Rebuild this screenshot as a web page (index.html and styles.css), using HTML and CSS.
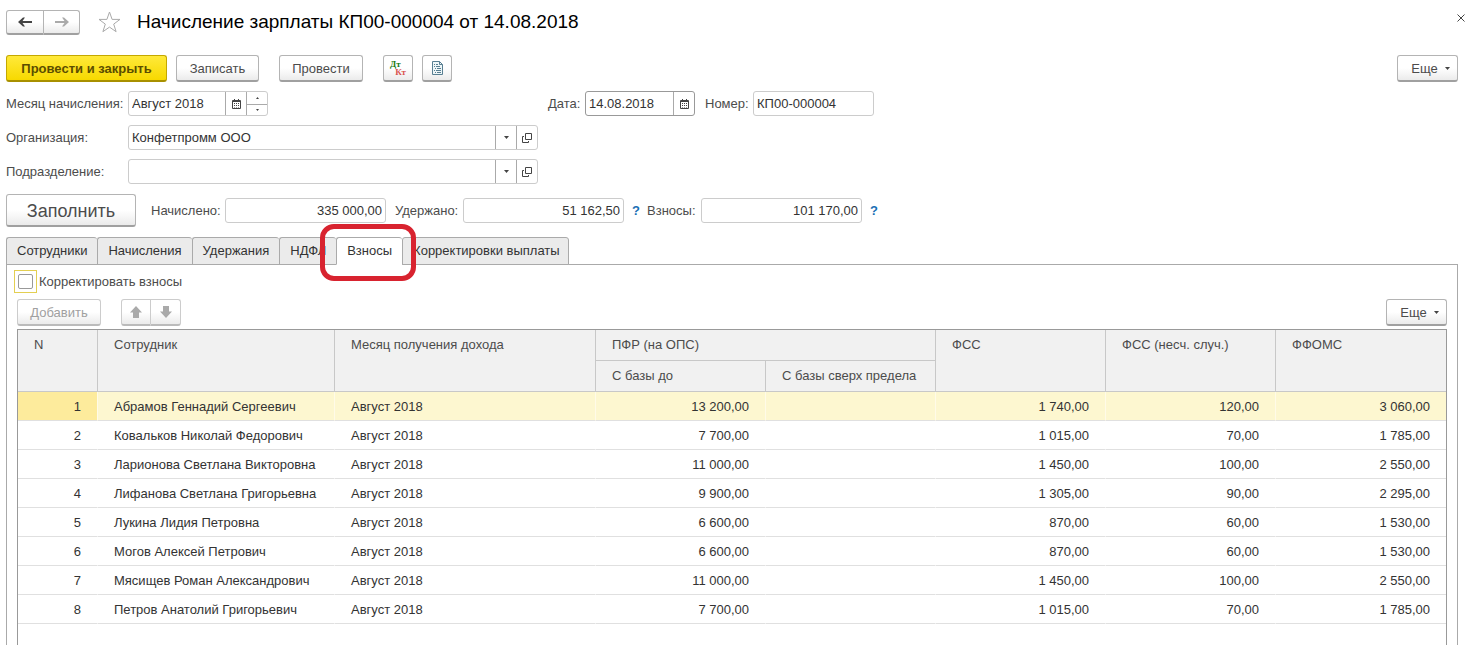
FILE: index.html
```html
<!DOCTYPE html>
<html lang="ru">
<head>
<meta charset="utf-8">
<title>Начисление зарплаты КП00-000004 от 14.08.2018</title>
<link rel="stylesheet" href="styles.css">
</head>
<body>
<svg class="sprite" aria-hidden="true">
  <symbol id="calendar" viewBox="0 0 9 10"><path fill="#444" d="M1 1h1V0h1v1h3V0h1v1h1q1 0 1 1v7q0 1-1 1H1Q0 10 0 9V2Q0 1 1 1z"/><path fill="#fff" d="M1 3h7v6H1z"/><path fill="#444" d="M2 4h1v1H2zM4 4h1v1H4zM6 4h1v1H6zM2 6h1v1H2zM4 6h1v1H4zM6 6h1v1H6zM2 8h1v.5H2zM4 8h1v.5H4zM6 8h1v.5H6z"/></symbol>
  <symbol id="open" viewBox="0 0 10 10"><path fill="none" stroke="#444" d="M3.500.5h6v6h-6zM2 3.500H.5v6h6V8"/></symbol>
  <symbol id="caret" viewBox="0 0 5 3"><path fill="#444" d="M0 0h5L2.500 3z"/></symbol>
</svg>
<main class="window">
  <header class="titlebar">
    <div class="pair">
      <button class="btn" aria-label="Назад"><svg width="14" height="10" viewBox="0 0 14 10"><path fill="#444" d="M0 5L5 .5h2L4.500 4H14v2H4.500L7 9.500H5z"/></svg></button>
      <button class="btn" aria-label="Вперед"><svg width="14" height="10" viewBox="0 0 14 10"><path fill="#aaa" d="M14 5L9 .5H7L9.500 4H0v2h9.500L7 9.500h2z"/></svg></button>
    </div>
    <button class="plain star" aria-label="В избранное"><svg width="23" height="22" viewBox="0 0 23 22"><path fill="none" stroke="#aaa" d="M11.500 1l2.600 7.400h7.900l-6.300 4.700 2.400 7.600-6.600-4.600-6.600 4.600 2.400-7.600L1 8.400h7.900z"/></svg></button>
    <h1 class="title">Начисление зарплаты КП00-000004 от 14.08.2018</h1>
    <button class="plain close" aria-label="Закрыть"><svg width="8" height="8" viewBox="0 0 8 8"><path stroke="#444" d="M.5.5l7 7M7.500.5l-7 7"/></svg></button>
  </header>

  <div class="toolbar">
    <button class="btn primary">Провести и закрыть</button>
    <button class="btn write">Записать</button>
    <button class="btn post">Провести</button>
    <button class="btn icon" aria-label="Дебет и кредит"><span class="dtkt"><span class="dt">Дт</span><span class="kt">Кт</span></span></button>
    <button class="btn icon" aria-label="Отчет"><svg width="13" height="14" viewBox="0 0 13 14"><path fill="#eef6f8" stroke="#587f92" d="M1.500.5h7l3 3v10h-10z"/><path fill="none" stroke="#587f92" d="M8.500.5v3h3M3 3.500h1M5 3.500h2M3 5.500h1M5 5.500h4M4 7.500h1M6 7.500h4M3 9.500h1M5 9.500h5M4 11.500h1M6 11.500h4"/></svg></button>
    <button class="btn more">Еще <svg width="5" height="3"><use href="#caret"/></svg></button>
  </div>

  <div class="form">
    <div class="row">
      <div class="lead">
        <label class="name" for="month">Месяц начисления:</label>
        <div class="field month">
          <input id="month" value="Август 2018">
          <button class="cell" aria-label="Выбрать месяц"><svg width="9" height="10"><use href="#calendar"/></svg></button>
          <div class="spin">
            <button aria-label="Больше"><svg width="3" height="2" viewBox="0 0 3 2"><path fill="#444" d="M0 2h3L1.500 0z"/></svg></button>
            <button aria-label="Меньше"><svg width="3" height="2" viewBox="0 0 3 2"><path fill="#444" d="M0 0h3L1.500 2z"/></svg></button>
          </div>
        </div>
      </div>
      <label class="date-name" for="date">Дата:</label>
      <div class="field date">
        <input id="date" value="14.08.2018">
        <button class="cell" aria-label="Выбрать дату"><svg width="9" height="10"><use href="#calendar"/></svg></button>
      </div>
      <label class="number-name" for="number">Номер:</label>
      <div class="field number"><input id="number" value="КП00-000004"></div>
    </div>
    <div class="row">
      <div class="lead">
        <label class="name" for="org">Организация:</label>
        <div class="field wide">
          <div class="drop"><select id="org"><option>Конфетпромм ООО</option></select><span class="arrow"><svg width="5" height="3"><use href="#caret"/></svg></span></div>
          <button class="cell" aria-label="Открыть организацию"><svg width="10" height="10"><use href="#open"/></svg></button>
        </div>
      </div>
    </div>
    <div class="row">
      <div class="lead">
        <label class="name" for="dept">Подразделение:</label>
        <div class="field wide">
          <div class="drop"><select id="dept"><option></option></select><span class="arrow"><svg width="5" height="3"><use href="#caret"/></svg></span></div>
          <button class="cell" aria-label="Открыть подразделение"><svg width="10" height="10"><use href="#open"/></svg></button>
        </div>
      </div>
    </div>
  </div>

  <div class="totals">
    <button class="btn fill">Заполнить</button>
    <label class="sum-name accrued" for="accrued">Начислено:</label>
    <div class="field sum"><input id="accrued" value="335 000,00"></div>
    <label class="sum-name held" for="held">Удержано:</label>
    <div class="field sum"><input id="held" value="51 162,50"></div>
    <button class="plain help">?</button>
    <label class="sum-name fees" for="fees">Взносы:</label>
    <div class="field sum"><input id="fees" value="101 170,00"></div>
    <button class="plain help">?</button>
  </div>

  <div class="tabs" role="tablist">
    <button class="tab" role="tab">Сотрудники</button>
    <button class="tab" role="tab">Начисления</button>
    <button class="tab" role="tab">Удержания</button>
    <button class="tab" role="tab">НДФЛ</button>
    <button class="tab active" role="tab" aria-selected="true">Взносы</button>
    <button class="tab" role="tab">Корректировки выплаты</button>
  </div>

  <section class="panel">
    <label class="check"><span class="focus"><input type="checkbox"></span>Корректировать взносы</label>
    <div class="commands">
      <button class="btn add" disabled>Добавить</button>
      <div class="pair small">
        <button class="btn" disabled aria-label="Вверх"><svg width="12" height="12" viewBox="0 0 12 12"><path fill="#aaa" d="M6 0l6 6.500H9V12H3V6.500H0z"/></svg></button>
        <button class="btn" disabled aria-label="Вниз"><svg width="12" height="12" viewBox="0 0 12 12"><path fill="#aaa" d="M6 12l6-6.500H9V0H3v5.500H0z"/></svg></button>
      </div>
      <button class="btn more">Еще <svg width="5" height="3"><use href="#caret"/></svg></button>
    </div>
    <div class="grid">
      <table>
        <colgroup><col class="c-n"><col class="c-name"><col class="c-month"><col class="c-num"><col class="c-num"><col class="c-num"><col class="c-num"><col class="c-num"></colgroup>
        <thead>
          <tr><th rowspan="2">N</th><th rowspan="2">Сотрудник</th><th rowspan="2">Месяц получения дохода</th><th colspan="2">ПФР (на ОПС)</th><th rowspan="2">ФСС</th><th rowspan="2">ФСС (несч. случ.)</th><th rowspan="2">ФФОМС</th></tr>
          <tr><th>С базы до</th><th>С базы сверх предела</th></tr>
        </thead>
        <tbody>
          <tr class="current"><td>1</td><td>Абрамов Геннадий Сергеевич</td><td>Август 2018</td><td>13 200,00</td><td></td><td>1 740,00</td><td>120,00</td><td>3 060,00</td></tr>
          <tr><td>2</td><td>Ковальков Николай Федорович</td><td>Август 2018</td><td>7 700,00</td><td></td><td>1 015,00</td><td>70,00</td><td>1 785,00</td></tr>
          <tr><td>3</td><td>Ларионова Светлана Викторовна</td><td>Август 2018</td><td>11 000,00</td><td></td><td>1 450,00</td><td>100,00</td><td>2 550,00</td></tr>
          <tr><td>4</td><td>Лифанова Светлана Григорьевна</td><td>Август 2018</td><td>9 900,00</td><td></td><td>1 305,00</td><td>90,00</td><td>2 295,00</td></tr>
          <tr><td>5</td><td>Лукина Лидия Петровна</td><td>Август 2018</td><td>6 600,00</td><td></td><td>870,00</td><td>60,00</td><td>1 530,00</td></tr>
          <tr><td>6</td><td>Могов Алексей Петрович</td><td>Август 2018</td><td>6 600,00</td><td></td><td>870,00</td><td>60,00</td><td>1 530,00</td></tr>
          <tr><td>7</td><td>Мясищев Роман Александрович</td><td>Август 2018</td><td>11 000,00</td><td></td><td>1 450,00</td><td>100,00</td><td>2 550,00</td></tr>
          <tr><td>8</td><td>Петров Анатолий Григорьевич</td><td>Август 2018</td><td>7 700,00</td><td></td><td>1 015,00</td><td>70,00</td><td>1 785,00</td></tr>
        </tbody>
      </table>
    </div>
  </section>
</main>
</body>
</html>
```
FILE: styles.css
```css
* { box-sizing: border-box; }
body { margin: 0; background: #fff; }
body, button, input, select { font: 13px/16px "Liberation Sans", Arial, sans-serif; color: #333; }
button { margin: 0; padding: 0; white-space: nowrap; }
svg { display: block; }
.sprite { position: absolute; width: 0; height: 0; }
.window { display: flex; flex-direction: column; min-height: 100vh; padding: 9px 15px 0 6px; }

.btn {
  display: flex; align-items: center; justify-content: center;
  height: 27px; padding-top: 1px; color: #4c4c4c;
  border: 1px solid #b4b4b4; border-bottom: 2px solid #a0a0a0; border-radius: 3px;
  background: linear-gradient(#fff 50%, #ebebeb);
}
.btn:disabled { color: #a0a0a0; border-color: #ccc; border-bottom-color: #bbb; }
.plain { border: 0; background: none; }
.pair { display: flex; }
.pair .btn { width: 38px; height: 25px; padding: 0; }
.pair .btn:first-child { border-radius: 3px 0 0 3px; }
.pair .btn:last-child { width: 36px; border-left: 0; border-radius: 0 3px 3px 0; }
.small .btn, .small .btn:last-child { width: 30px; height: 27px; }

.titlebar { display: flex; align-items: center; height: 26px; margin-right: -7px; }
.star { margin: 0 16px 0 18px; }
.title { margin: 0; font-size: 19px; line-height: 24px; font-weight: normal; color: #000; }
.close { margin-left: auto; padding-bottom: 8px; }

.toolbar { display: flex; margin-top: 20px; }
.primary { width: 161px; font-weight: bold; color: #5b4d00; border-color: #c4a800; border-bottom-color: #a89000; background: linear-gradient(#ffe93a, #f7d900); }
.write { width: 83px; margin-left: 9px; }
.post { width: 84px; margin-left: 20px; }
.icon { width: 30px; margin-left: 9px; padding: 0; }
.post + .icon { margin-left: 20px; }
.dtkt { display: grid; width: 16px; font: bold 9px/8px "Liberation Serif", serif; }
.dt { color: #217a12; text-align: left; }
.kt { color: #d9534f; text-align: right; }
.more { width: 61px; gap: 7px; margin-left: auto; padding-left: 6px; }

.form { display: grid; gap: 9px; margin-top: 9px; }
.row, .lead, .totals { display: flex; align-items: center; }
.lead { width: 532px; }
label { color: #4c4c4c; white-space: nowrap; }
.name { width: 122px; }
.field { display: flex; height: 25px; border: 1px solid #ccc; border-radius: 3px; background: #fff; }
.field input, .field select { flex: 1; min-width: 0; width: 100%; padding: 0 3px; border: 0; outline: 0; background: none; appearance: none; }
.cell { display: grid; place-items: center; width: 21px; border: 0; border-left: 1px solid #aaa; background: none; }
.month { width: 140px; }
.spin { display: grid; grid-template-rows: 1fr 1fr; width: 21px; border-left: 1px solid #aaa; }
.spin button { display: grid; place-items: center; border: 0; background: none; }
.spin button + button { border-top: 1px solid #aaa; }
.wide { width: 410px; }
.drop { display: grid; flex: 1; grid-template-columns: 1fr 21px; }
.drop select { grid-area: 1 / 1 / 2 / 3; }
.arrow { grid-area: 1 / 2; display: grid; place-items: center; border-left: 1px solid #aaa; pointer-events: none; }
.date-name { width: 47px; padding-left: 10px; }
.date { width: 110px; border-color: #999; }
.number-name { width: 58px; padding-left: 10px; }
.number { width: 121px; }

.totals { margin-top: 10px; }
.fill { width: 130px; height: 33px; font-size: 18px; }
.sum { width: 161px; }
.sum input { text-align: right; }
.accrued { width: 89px; padding-left: 15px; }
.held { width: 77px; padding-left: 9px; }
.fees { width: 60px; padding-left: 6px; }
.help { width: 17px; color: #1a6fb5; font-weight: bold; text-align: right; padding-right: 1px; }

.tabs { display: flex; height: 28px; margin-top: 10px; position: relative; }
.tab { height: 28px; padding: 0 10px; border: 1px solid #aaa; border-right-width: 0; border-radius: 3px 3px 0 0; background: #ebebeb; }
.tab:last-child { padding: 0 8px 0 10px; border-right-width: 1px; }
.active { position: relative; background: #fff; border-bottom-color: #fff; }
.active::after { content: ""; position: absolute; z-index: 1; inset: -14px -14px -17px -17px; border: 5px solid #d8232f; border-radius: 14px; }

.panel { flex: 1; display: flex; flex-direction: column; margin-top: -1px; padding: 5px 10px 0; border: 1px solid #aaa; border-bottom: 0; }
.check { display: flex; align-items: center; align-self: flex-start; gap: 2px; margin-left: -3px; }
.focus { display: grid; place-items: center; width: 23px; height: 23px; border: 1px solid #e3cf52; }
.check input { appearance: none; width: 15px; height: 15px; margin: 0; border: 1px solid #999; border-radius: 2px; background: #fff; }
.commands { display: flex; margin-top: 6px; }
.add { width: 84px; margin-right: 20px; }

.grid { flex: 1; margin-top: 3px; border: 1px solid #999; border-bottom: 0; }
table { width: 100%; table-layout: fixed; border-collapse: separate; border-spacing: 0; }
.c-n { width: 80px; }
.c-name { width: 237px; }
.c-month { width: 261px; }
.c-num { width: 170px; }
th { height: 31px; padding: 7px 16px 0; text-align: left; vertical-align: top; font-weight: normal; color: #4c4c4c; background: #f1f1f1; border-right: 1px solid #c8c8c8; border-bottom: 1px solid #c8c8c8; white-space: nowrap; }
td { height: 29px; padding: 2px 16px 0; border-right: 1px solid transparent; border-bottom: 1px solid #e0e0e0; white-space: nowrap; text-align: right; }
td:nth-child(2), td:nth-child(3) { text-align: left; }
tr:first-child th:last-child, td:last-child { border-right: 0; }
.current td { background: #fdf7d0; border-right-color: #fffbe8; }
.current td:first-child { background: #fdeb9c; }
```
